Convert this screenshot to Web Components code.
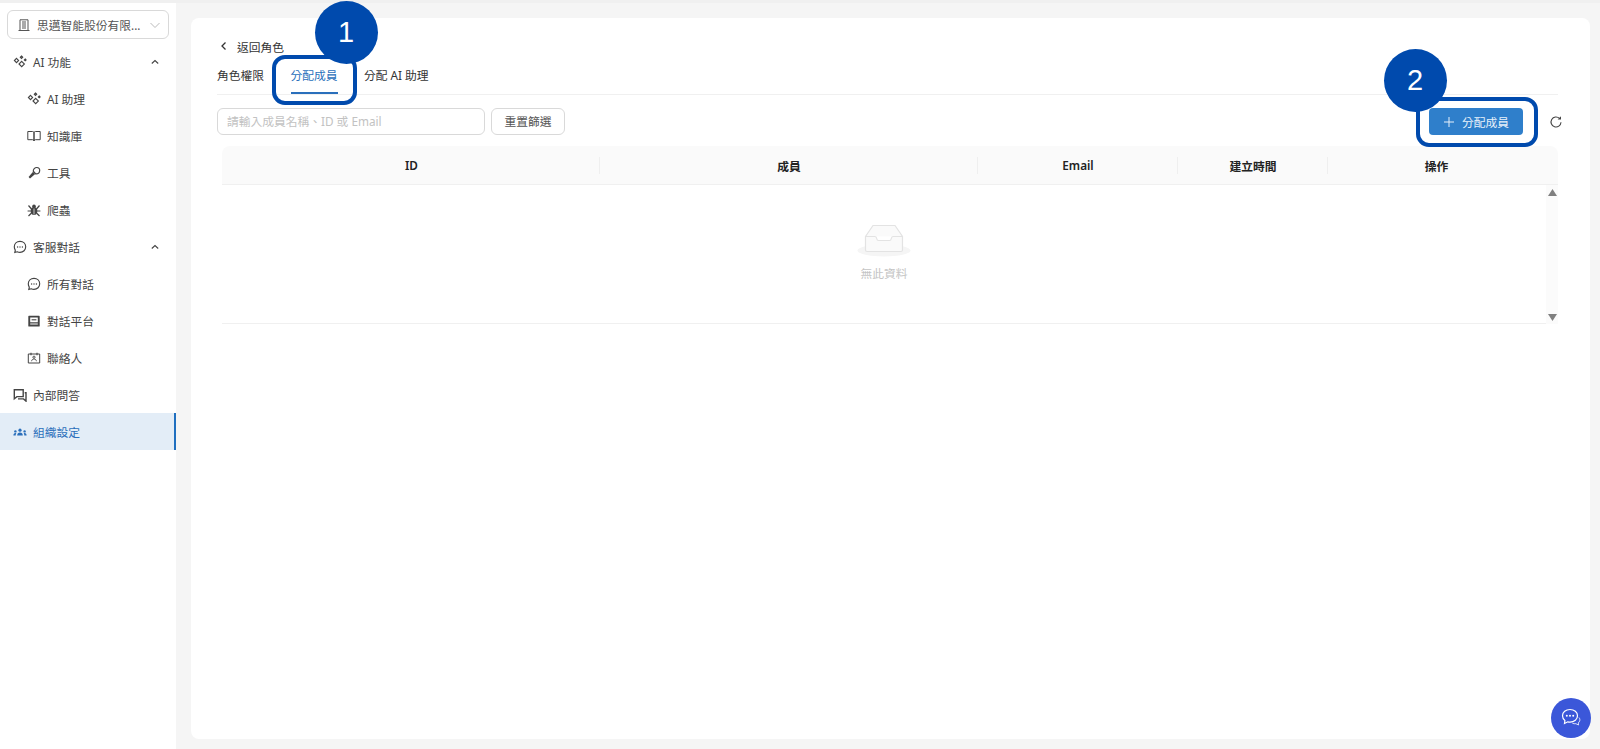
<!DOCTYPE html>
<html lang="zh-Hant">
<head>
<meta charset="utf-8">
<title>分配成員</title>
<style>
  html, body { margin: 0; height: 749px; overflow: hidden; background: #f5f5f5; }
  body { font: 11.75px "Noto Sans", "Noto Sans CJK TC", sans-serif; color: #333; }
</style>
</head>
<body>
<app-shell>
  <app-sidebar slot="side"></app-sidebar>
  <member-panel slot="main"></member-panel>
</app-shell>
<step-mark n="1" style="--cx:346px;--cy:32px;--x:272px;--y:55px;--w:85px;--h:50px"></step-mark>
<step-mark n="2" style="--cx:1415px;--cy:80px;--x:1416px;--y:97px;--w:122px;--h:50px"></step-mark>
<chat-fab></chat-fab>

<script>
const icons = {
    spark: '<path d="M3.500 3.400 5.600 5.500 3.500 7.600 1.400 5.500zM8.700 6.300 11.400 9 8.700 11.700 6 9zM8.500 1l1.200 1.200-1.200 1.200-1.200-1.200zM12.200 4l.9.900-.9.900-.9-.9z" fill="none" stroke="currentColor" stroke-width="1.100"/>',
    book: '<path d="M.8 2.500h4.800c.9 0 1.400.5 1.400 1.300v8c0-.7-.5-1.100-1.400-1.100H.8zM13.200 2.500H8.400c-.9 0-1.400.5-1.400 1.300v8c0-.7.5-1.100 1.400-1.100h4.800z" fill="none" stroke="currentColor" stroke-width="1"/>',
    tool: '<path d="M3 12.500 1.600 11.100 6 5.800 8.200 8z" fill="currentColor"/><path d="M6.300 5.200c-.2-2 1.500-3.700 3.500-3.700 2 0 3 1.200 2.900 3-.1 2-1.700 3.500-4 3.400z" fill="none" stroke="currentColor" stroke-width="1.200"/>',
    bug: '<ellipse cx="7" cy="8" rx="3.300" ry="3.900" fill="currentColor"/><circle cx="7" cy="3.300" r="1.800" fill="currentColor"/><path d="M1.500 2.500 4.500 6M12.500 2.500 9.500 6M.6 8h3.400M13.400 8H10M1.500 13 4.500 10M12.500 13 9.500 10" stroke="currentColor" stroke-width="1.200" fill="none"/><path d="M7 5.500v6" stroke="#fff" stroke-width=".7"/>',
    chat: '<path d="M7 1.300c3.300 0 5.700 2.400 5.700 5.500s-2.400 5.600-5.700 5.600c-1 0-1.900-.2-2.700-.6l-2.500.6.500-2.300A5.500 5.500 0 0 1 1.300 6.800c0-3.100 2.400-5.500 5.700-5.500z" fill="none" stroke="currentColor" stroke-width="1.150"/><circle cx="4.600" cy="7" r=".7" fill="currentColor"/><circle cx="7" cy="7" r=".7" fill="currentColor"/><circle cx="9.400" cy="7" r=".7" fill="currentColor"/>',
    inbox: '<path fill-rule="evenodd" d="M2 1.800h10a.7.7 0 0 1 .7.700v9.400a.7.7 0 0 1-.7.700H2a.7.7 0 0 1-.7-.7V2.500A.7.7 0 0 1 2 1.800zm1.200 1.600v4.800h7.600V3.400zm0 6.200v1h7.600v-1z" fill="currentColor"/><path d="M4.600 5.800h4.800" stroke="currentColor" stroke-width="1.100"/>',
    contact: '<path d="M1.300 3h11.400v9H1.300z" fill="none" stroke="currentColor" stroke-width="1"/><path d="M4 1.800v2.400M10 1.800v2.400" stroke="currentColor" stroke-width="1.100"/><circle cx="7" cy="6.200" r="1.100" fill="none" stroke="currentColor" stroke-width=".9"/><path d="M4.600 10.200c.2-1.500 1-2.200 2.400-2.200s2.200.7 2.400 2.200" fill="none" stroke="currentColor" stroke-width=".9"/>',
    qa: '<path d="M1.300 1.800h8.900v6.800H3.900L1.300 10.700z" fill="none" stroke="currentColor" stroke-width="1.400"/><path d="M11.700 4.800h1.300v8.300l-2.500-2.200H5" fill="none" stroke="currentColor" stroke-width="1.400"/>',
    org: '<circle cx="7" cy="5.200" r="1.600" fill="currentColor"/><path d="M4.200 10.500c0-2 1.100-3 2.800-3s2.800 1 2.800 3z" fill="currentColor"/><circle cx="2.400" cy="6.400" r="1.200" fill="currentColor"/><path d="M.4 10.500c0-1.500.7-2.500 2-2.500.3 0 .6 0 .9.200-.4.600-.6 1.400-.6 2.300z" fill="currentColor"/><circle cx="11.600" cy="6.400" r="1.200" fill="currentColor"/><path d="M13.600 10.500c0-1.500-.7-2.500-2-2.500-.3 0-.6 0-.9.200.4.600.6 1.400.6 2.300z" fill="currentColor"/>',
    building: '<path d="M3 1.800h8v10.700H3zM1.500 12.500h11" fill="none" stroke="currentColor" stroke-width="1"/><path d="M5 4h4M5 6h4M5 8h4M5 10h4" stroke="currentColor" stroke-width="1"/>'
};

function svgIcon(name, size) {
    return `<svg width="${size}" height="${size}" viewBox="0 0 14 14">${icons[name]}</svg>`;
}

class AppShell extends HTMLElement {
    constructor() {
        super();
        this.attachShadow({ mode: 'open' });
        this.shadowRoot.innerHTML = `
          <style>
            :host { display: grid; grid-template-columns: 176px 1fr; height: 749px; box-sizing: border-box; border-top: 3px solid #f0f0f0; }
            .main { padding: 15px 10px 10px 15px; min-width: 0; display: grid; box-sizing: border-box; }
          </style>
          <slot name="side"></slot>
          <div class="main"><slot name="main"></slot></div>
        `;
    }
}

class OrgPicker extends HTMLElement {
    constructor() {
        super();
        this.attachShadow({ mode: 'open' });
        this.shadowRoot.innerHTML = `
          <style>
            :host { display: flex; align-items: center; height: 27px; margin: 7px 7px 0 7px; padding: 0 7px 0 9px;
                    border: 1px solid #d9d9d9; border-radius: 6px; color: #555; background: #fff; }
            svg { flex: none; }
            .name { flex: 1; margin-left: 6px; white-space: nowrap; }
            .arrow { color: #bbb; }
          </style>
          ${svgIcon('building', 14)}
          <span class="name">思邁智能股份有限...</span>
          <svg class="arrow" width="12" height="12" viewBox="0 0 12 12"><path d="M1.500 4 6 8.500 10.500 4" fill="none" stroke="currentColor"/></svg>
        `;
    }
}

class NavItem extends HTMLElement {
    constructor() {
        super();
        const sub = this.hasAttribute('sub');
        const active = this.hasAttribute('active');
        const caret = this.hasAttribute('open-group');
        this.attachShadow({ mode: 'open' });
        this.shadowRoot.innerHTML = `
          <style>
            :host { display: flex; align-items: center; height: 37px; box-sizing: border-box;
                    padding-left: ${sub ? 27 : 13}px; gap: 6px; color: ${active ? '#2a6fbb' : '#444'};
                    ${active ? 'background: #e3edf7; border-right: 2px solid #1f6fc0;' : ''} }
            .text { flex: 1; white-space: nowrap; }
            svg { flex: none; color: #444; }
            :host([active]) svg { color: #2a6fbb; }
            .caret { margin-right: 16px; }
          </style>
          ${svgIcon(this.getAttribute('icon'), 14)}
          <span class="text"><slot></slot></span>
          ${caret ? '<svg class="caret" width="10" height="10" viewBox="0 0 10 10"><path d="M1.800 6.500 5 3.500l3.200 3" fill="none" stroke="currentColor" stroke-width="1.100"/></svg>' : ''}
        `;
    }
}

class AppSidebar extends HTMLElement {
    constructor() {
        super();
        this.attachShadow({ mode: 'open' });
        this.shadowRoot.innerHTML = `
          <style>
            :host { display: block; background: #fff; height: 746px; box-sizing: border-box; overflow: hidden; }
            nav { margin-top: 4px; }
          </style>
          <org-picker></org-picker>
          <nav>
            <nav-item icon="spark" open-group>AI 功能</nav-item>
            <nav-item icon="spark" sub>AI 助理</nav-item>
            <nav-item icon="book" sub>知識庫</nav-item>
            <nav-item icon="tool" sub>工具</nav-item>
            <nav-item icon="bug" sub>爬蟲</nav-item>
            <nav-item icon="chat" open-group>客服對話</nav-item>
            <nav-item icon="chat" sub>所有對話</nav-item>
            <nav-item icon="inbox" sub>對話平台</nav-item>
            <nav-item icon="contact" sub>聯絡人</nav-item>
            <nav-item icon="qa">內部問答</nav-item>
            <nav-item icon="org" active>組織設定</nav-item>
          </nav>
        `;
    }
}

class RoleTabs extends HTMLElement {
    constructor() {
        super();
        this.attachShadow({ mode: 'open' });
        this.shadowRoot.innerHTML = `
          <style>
            :host { display: flex; gap: 26.500px; height: 40px; box-sizing: border-box; border-bottom: 1px solid #f0f0f0; }
            div { height: 39px; box-sizing: border-box; padding-top: 11px; line-height: 18px; color: #333; white-space: nowrap; }
            .on { color: #2a6fbb; border-bottom: 2px solid #2a6fbb; }
          </style>
          <div>角色權限</div>
          <div class="on">分配成員</div>
          <div>分配 AI 助理</div>
        `;
    }
}

class MemberToolbar extends HTMLElement {
    constructor() {
        super();
        this.attachShadow({ mode: 'open' });
        this.shadowRoot.innerHTML = `
          <style>
            :host { display: flex; align-items: center; gap: 6px; height: 27px; margin: 13px -5px 0 0; }
            .search { width: 268px; height: 27px; box-sizing: border-box; border: 1px solid #d9d9d9; border-radius: 6px;
                      padding: 0 9px; line-height: 25px; color: #c2c2c2; white-space: nowrap; }
            .reset { width: 74px; height: 27px; box-sizing: border-box; border: 1px solid #d9d9d9; border-radius: 6px;
                     text-align: center; line-height: 25px; color: #555; }
            .spacer { flex: 1; }
            .add { width: 94px; height: 27px; display: flex; align-items: center; justify-content: center; gap: 7px;
                   background: #2f7fcb; color: #e8f1fa; border-radius: 4px; }
            .refresh { margin: 0 0 0 20px; color: #444; }
          </style>
          <div class="search">請輸入成員名稱、ID 或 Email</div>
          <div class="reset">重置篩選</div>
          <div class="spacer"></div>
          <div class="add">
            <svg width="12" height="12" viewBox="0 0 12 12"><path d="M6 1v10M1 6h10" stroke="currentColor" fill="none"/></svg>
            <span>分配成員</span>
          </div>
          <svg class="refresh" width="14" height="14" viewBox="0 0 14 14"><path d="M12 7.300A5 5 0 1 1 10.500 3.400" fill="none" stroke="currentColor" stroke-width="1.100"/><path d="M8.700 4.500h3.300V1.200" fill="currentColor"/></svg>
        `;
    }
}

class EmptyState extends HTMLElement {
    constructor() {
        super();
        this.attachShadow({ mode: 'open' });
        this.shadowRoot.innerHTML = `
          <style>
            :host { display: flex; flex-direction: column; align-items: center; color: #c4c4c4; }
            svg { display: block; }
            span { margin-top: 7px; line-height: 18px; }
          </style>
          <svg width="54" height="34" viewBox="0 0 54 34">
            <ellipse cx="27" cy="27.500" rx="26.500" ry="6" fill="#f5f5f5"/>
            <path d="M8.500 13.500 16 2.500h22l7.500 11V27a1.500 1.500 0 0 1-1.500 1.500H10A1.500 1.500 0 0 1 8.500 27z" fill="#fafafa" stroke="#e3e3e3" stroke-width="1.200"/>
            <path d="M8.500 13.500H18c1 0 1.500.8 1.700 2 .2 1.200 1 2 2 2h10.600c1 0 1.800-.8 2-2 .2-1.200.7-2 1.700-2h9.500" fill="#fff" stroke="#e3e3e3" stroke-width="1.200"/>
          </svg>
          <span>無此資料</span>
        `;
    }
}

class DataTable extends HTMLElement {
    constructor() {
        super();
        this.attachShadow({ mode: 'open' });
        const cols = ['ID', '成員', 'Email', '建立時間', '操作'];
        this.shadowRoot.innerHTML = `
          <style>
            :host { display: block; margin: 11px 0 0 5px; }
            .head { display: grid; grid-template-columns: 377px 378px 200px 150px 1fr; height: 39px; background: #fafafa;
                    border-radius: 8px 8px 0 0; border-bottom: 1px solid #f0f0f0; box-sizing: border-box; }
            .head div { position: relative; display: flex; align-items: center; justify-content: center; padding-left: 2px;
                        font-weight: 600; color: #222; }
            .head div:last-child { padding: 0 12px 0 0; }
            .head div + div::before { content: ""; position: absolute; left: 0; top: 11px; height: 17px; width: 1px; background: #efefef; }
            .body { display: grid; grid-template-columns: 1fr 12px; height: 139px; box-sizing: border-box; }
            .rows { border-bottom: 1px solid #f0f0f0; padding-top: 38px; }
            .scroll { background: #fbfbfb; display: flex; flex-direction: column; justify-content: space-between; align-items: center; padding: 4px 0 3px; box-sizing: border-box; }
            .scroll svg { display: block; }
          </style>
          <div class="head">${cols.map(c => `<div>${c}</div>`).join('')}</div>
          <div class="body">
            <div class="rows"><empty-state></empty-state></div>
            <div class="scroll">
              <svg width="9" height="7" viewBox="0 0 9 7"><path d="M4.500 0 9 7H0z" fill="#808080"/></svg>
              <svg width="9" height="7" viewBox="0 0 9 7"><path d="M0 0h9L4.500 7z" fill="#808080"/></svg>
            </div>
          </div>
        `;
    }
}

class MemberPanel extends HTMLElement {
    constructor() {
        super();
        this.attachShadow({ mode: 'open' });
        this.shadowRoot.innerHTML = `
          <style>
            :host { display: block; background: #fff; border-radius: 8px; padding: 19px 32px 0 26px; box-sizing: border-box; height: 721px; }
            .back { display: flex; align-items: center; gap: 10px; height: 18px; color: #333; padding-left: 3px; }
          </style>
          <div class="back">
            <svg width="7" height="10" viewBox="0 0 7 10"><path d="M5.500 1.500 2 5l3.500 3.500" fill="none" stroke="currentColor" stroke-width="1.300"/></svg>
            <span>返回角色</span>
          </div>
          <role-tabs></role-tabs>
          <member-toolbar></member-toolbar>
          <data-table></data-table>
        `;
    }
}

class StepMark extends HTMLElement {
    constructor() {
        super();
        this.attachShadow({ mode: 'open' });
        this.shadowRoot.innerHTML = `
          <style>
            :host { display: block; position: absolute; left: 0; top: 0; width: 0; height: 0; }
            .box { position: absolute; left: var(--x); top: var(--y); width: var(--w); height: var(--h); box-sizing: border-box;
                   border: 4px solid #004aad; border-radius: 13px; }
            .dot { position: absolute; left: calc(var(--cx) - 31.500px); top: calc(var(--cy) - 31.500px); width: 63px; height: 63px;
                   border-radius: 50%; background: #004aad; color: #fff; display: flex; align-items: center; justify-content: center;
                   font: 29px "Liberation Sans", sans-serif; }
          </style>
          <div class="box"></div>
          <div class="dot">${this.getAttribute('n')}</div>
        `;
    }
}

class ChatFab extends HTMLElement {
    constructor() {
        super();
        this.attachShadow({ mode: 'open' });
        this.shadowRoot.innerHTML = `
          <style>
            :host { position: fixed; right: 9px; bottom: 11px; width: 40px; height: 40px; border-radius: 50%; background: #3b57d9;
                    display: flex; align-items: center; justify-content: center; color: #fff; }
          </style>
          <svg width="22" height="22" viewBox="0 0 22 22">
            <path d="M10 2.500c4.300 0 7.500 2.700 7.500 6.300s-3.200 6.300-7.500 6.300c-.8 0-1.500-.1-2.200-.3L4.500 16.500l.4-3C3.400 12.300 2.500 10.700 2.500 8.800c0-3.600 3.200-6.300 7.500-6.300z" fill="none" stroke="currentColor" stroke-width="1.200"/>
            <circle cx="6.800" cy="8.800" r="1" fill="currentColor"/><circle cx="10" cy="8.800" r="1" fill="currentColor"/><circle cx="13.200" cy="8.800" r="1" fill="currentColor"/>
            <path d="M19 10.500c.8 1 1 2 .8 3-.2 1-.8 1.800-1.500 2.400l.2 2.100-2.600-1.300c-1.200.2-2.500 0-3.500-.4" fill="none" stroke="currentColor" stroke-width="1" opacity=".8"/>
          </svg>
        `;
    }
}

// children first, so nested elements upgrade as soon as their parent parses them
customElements.define('org-picker', OrgPicker);
customElements.define('nav-item', NavItem);
customElements.define('role-tabs', RoleTabs);
customElements.define('member-toolbar', MemberToolbar);
customElements.define('empty-state', EmptyState);
customElements.define('data-table', DataTable);
customElements.define('app-sidebar', AppSidebar);
customElements.define('member-panel', MemberPanel);
customElements.define('app-shell', AppShell);
customElements.define('step-mark', StepMark);
customElements.define('chat-fab', ChatFab);
</script>
</body>
</html>
